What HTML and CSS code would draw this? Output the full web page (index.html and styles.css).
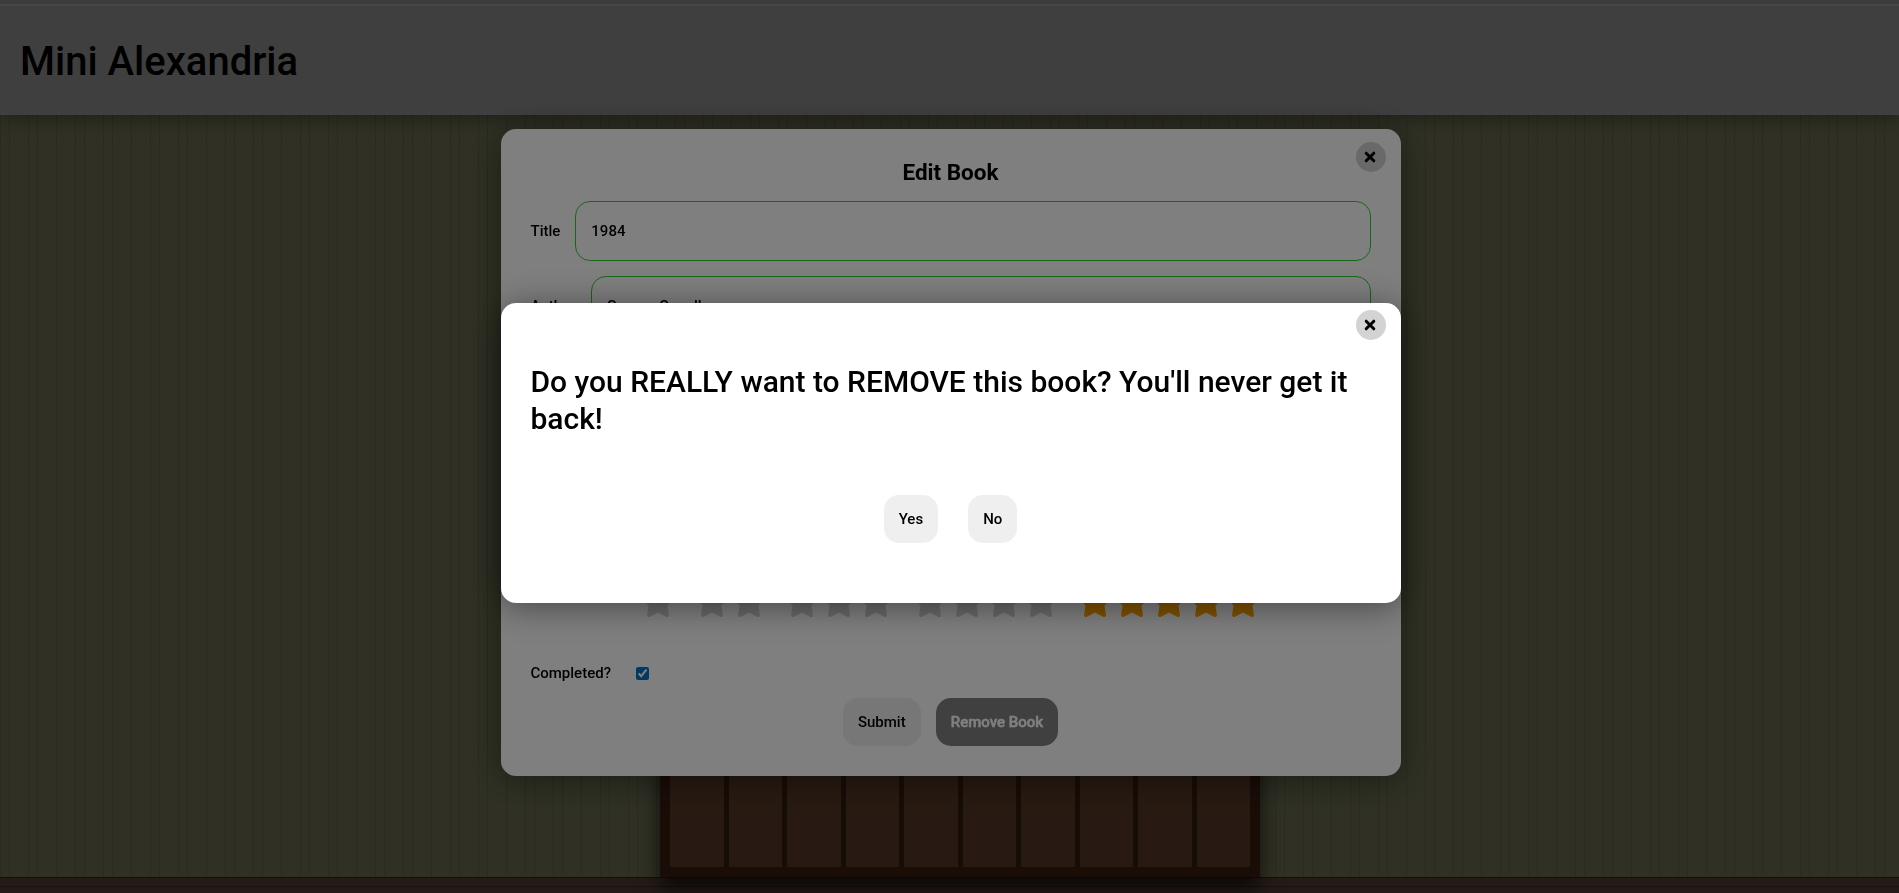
FILE: index.html
```html
<!DOCTYPE html>
<html lang="en">
<head>
<meta charset="utf-8">
<title>Mini Alexandria</title>
<link rel="stylesheet" href="styles.css">
</head>
<body>
<svg class="defs" width="0" height="0"><symbol id="star" viewBox="0 0 576 512"><path d="M316.900 18C311.600 7 300.400 0 288.100 0s-23.400 7-28.800 18L195 150.300 51.400 171.500c-12 1.800-22 10.200-25.700 21.700s-.7 24.200 7.900 32.700L137.800 329 113.200 474.700c-2 12 3 24.200 12.900 31.300s23 8 33.800 2.300l128.300-68.500 128.300 68.500c10.800 5.700 23.900 4.900 33.800-2.300s14.900-19.300 12.900-31.300L438.500 329 542.700 225.900c8.600-8.500 11.700-21.200 7.900-32.700s-13.700-19.900-25.700-21.700L381.200 150.300 316.900 18z"/></symbol>
<symbol id="cross" viewBox="0 0 12 12"><path d="M2.200 2.200 9.800 9.800M9.800 2.200 2.200 9.800" stroke="#000" stroke-width="3" stroke-linecap="round"/></symbol></svg>
<div class="page">
  <header class="header"><h1>Mini Alexandria</h1></header>
  <main class="wall">
    <div class="shelf"><i></i><i></i><i></i><i></i><i></i><i></i><i></i><i></i><i></i><i></i></div>
  </main>
  <div class="floor"></div>
</div>
<div class="backdrop">
  <section class="dialog edit">
    <button class="close"><svg><use href="#cross"/></svg></button>
    <h2>Edit Book</h2>
    <label class="field">Title<input value="1984"></label>
    <label class="field">Author<input value="George Orwell"></label>
    <div class="ratings">
      <span class="group"><svg><use href="#star"/></svg></span>
      <span class="group"><svg><use href="#star"/></svg><svg><use href="#star"/></svg></span>
      <span class="group"><svg><use href="#star"/></svg><svg><use href="#star"/></svg><svg><use href="#star"/></svg></span>
      <span class="group"><svg><use href="#star"/></svg><svg><use href="#star"/></svg><svg><use href="#star"/></svg><svg><use href="#star"/></svg></span>
      <span class="group on"><svg><use href="#star"/></svg><svg><use href="#star"/></svg><svg><use href="#star"/></svg><svg><use href="#star"/></svg><svg><use href="#star"/></svg></span>
    </div>
    <label class="completed">Completed?<input type="checkbox" checked></label>
    <div class="actions"><button class="btn">Submit</button><button class="btn remove">Remove Book</button></div>
  </section>
</div>
<div class="backdrop">
  <section class="dialog confirm">
    <button class="close"><svg><use href="#cross"/></svg></button>
    <p>Do you REALLY want to REMOVE this book? You'll never get it back!</p>
    <div class="actions"><button class="btn">Yes</button><button class="btn">No</button></div>
  </section>
</div>
</body>
</html>
```
FILE: styles.css
```css
* { box-sizing: border-box; margin: 0; }
body { font: 500 15px Roboto, sans-serif; color: #000; overflow: hidden; }
button, input { font: inherit; color: inherit; border: 0; }
.defs { position: absolute; }
.page { height: 100vh; display: flex; flex-direction: column; isolation: isolate; }
.header {
  height: 115px; flex: none; padding: 8px 20px 0; display: flex; align-items: center;
  background: linear-gradient(#f0f0f0 4px, #fff 4px, #fff 6px, #fcfcfc 6px);
  box-shadow: 0 0 20px rgba(0,0,0,.5); z-index: 2;
}
h1 { font-size: 40px; font-weight: 500; line-height: 47px; }
.wall {
  flex: 1; min-height: 0; display: flex; align-items: flex-end; justify-content: center; padding-left: 21px;
  background:
    linear-gradient(90deg, #acac80 1px, transparent 1px 9px, #acac80 9px 10px, transparent 10px 28px, #acac80 28px 29px, transparent 29px 37px, #acac80 37px 38px, transparent 38px 56px, #acac80 56px 57px, transparent 57px) 0 0 / 75px 100%,
    #c2c593;
}
.shelf {
  width: 600px; height: 600px; padding: 10px; display: flex; gap: 5px;
  background: #66341a; position: relative; z-index: 1;
  box-shadow: 0 12px 20px rgba(0,0,0,.7);
}
.shelf i { flex: 1; background: #a16a48; box-shadow: 5px 0 #5c341c; }
.shelf i:last-child { box-shadow: none; }
.floor { height: 16px; flex: none; background: linear-gradient(#593a30 1px, #906c60 1px 9px, #654a40 9px 10px, #906c60 10px); }
.backdrop {
  position: fixed; inset: 0;
  background: linear-gradient(rgba(0,0,0,.5) 4px, rgba(0,0,0,.47) 4px, rgba(0,0,0,.47) 6px, rgba(0,0,0,.5) 6px);
  display: flex; justify-content: center; align-items: center; padding: 12px 0 0 2px;
}
.dialog { position: relative; width: 900px; background: #fff; border-radius: 15px; box-shadow: 0 4px 34px rgba(0,0,0,.45); }
.edit { height: 647px; padding: 29px 30px 30px; display: flex; flex-direction: column; }
.confirm { height: 300px; padding: 60px 30px; }
.confirm p { font-size: 30px; line-height: 37px; }
.confirm .actions { gap: 30px; margin-top: 58px; }
.close {
  position: absolute; right: 15px; top: 13px; width: 30px; height: 30px; padding: 0 1px 0 0;
  border-radius: 50%; background: #d3d3d3; display: grid; place-items: center;
}
.confirm .close { top: 7px; }
.close svg { width: 12px; height: 12px; }
h2 { font-size: 22.5px; line-height: 28px; text-align: center; margin-bottom: 15px; font-weight: 700; }
.field { display: flex; align-items: center; gap: 15px; margin-bottom: 15px; height: 60px; }
.field input { flex: 1; height: 60px; border: 1px solid #32cd32; border-radius: 15px; padding: 0 15px; background: transparent; }
.ratings { margin-top: auto; display: flex; justify-content: center; gap: 17.500px; height: 32px; }
.group { display: flex; gap: 1.100px; }
.group svg { width: 36px; height: 32px; fill: #d3d3d3; }
.group.on svg { fill: orange; }
.completed { display: flex; align-items: center; gap: 25px; height: 20px; margin: 46px 0 15px; }
.completed input { width: 13px; height: 13px; margin: 0; accent-color: #0075c8; }
.actions { display: flex; justify-content: center; gap: 15px; }
.btn { height: 48px; padding: 0 15px; border-radius: 15px; background: #efefef; }
.remove { background: gray; color: #fff; -webkit-text-stroke: .5px #fff; }
```
